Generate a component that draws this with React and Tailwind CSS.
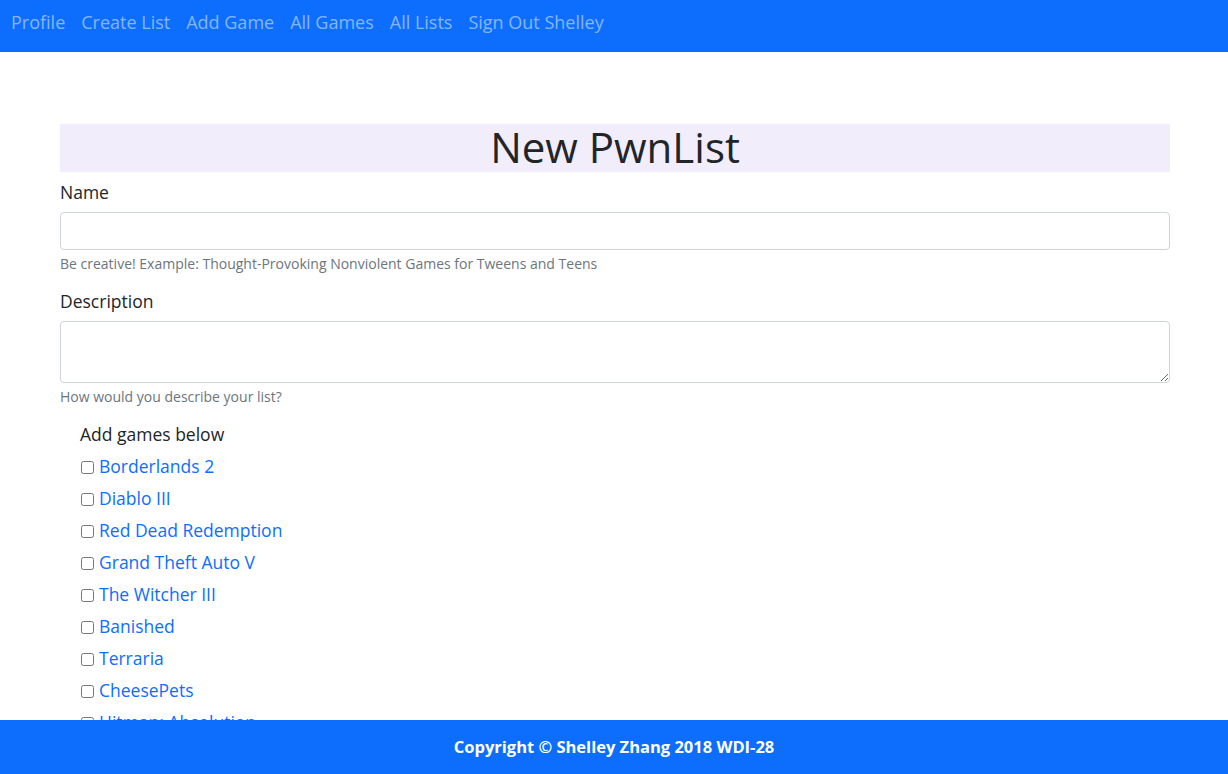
import React from "react";

const games = [
  "Borderlands 2",
  "Diablo III",
  "Red Dead Redemption",
  "Grand Theft Auto V",
  "The Witcher III",
  "Banished",
  "Terraria",
  "CheesePets",
  "Hitman: Absolution",
  "Stardew Valley",
];

const font = { fontFamily: '"Open Sans", "Noto Sans", sans-serif' };

export default function App() {
  return (
    <div className="min-h-screen bg-white text-[#212529]" style={font}>
      <nav className="h-[52px] bg-[#0d6efd] flex items-start pl-[3px] pt-[10px]">
        {["Profile", "Create List", "Add Game", "All Games", "All Lists", "Sign Out Shelley"].map((t) => (
          <a key={t} href="#" className="px-2 text-[18px] leading-6 text-[#86b6fe]">
            {t}
          </a>
        ))}
      </nav>

      <main className="ml-[60px] mr-[58px] mt-[72px] pb-[80px]">
        <h1 className="h-[48px] bg-[#f1edfa] text-center text-[42px] leading-[46px] text-[#212529]">
          New PwnList
        </h1>

        <div className="mt-2 mb-4">
          <label className="block text-[17.5px] leading-6 mb-2">Name</label>
          <input
            type="text"
            className="block w-full h-[38px] rounded-[4px] border border-[#ced4da] px-3 outline-none"
          />
          <div className="mt-1 text-[14px] leading-[19px] text-[#6c757d]">
            Be creative! Example: Thought-Provoking Nonviolent Games for Tweens and Teens
          </div>
        </div>

        <div className="mb-4">
          <label className="block text-[17.5px] leading-6 mb-2">Description</label>
          <textarea
            rows={2}
            className="block w-full h-[62px] rounded-[4px] border border-[#ced4da] px-3 py-1.5 outline-none"
          />
          <div className="mt-1 text-[14px] leading-[19px] text-[#6c757d]">
            How would you describe your list?
          </div>
        </div>

        <div className="pl-5">
          <div className="text-[17.5px] leading-6">Add games below</div>
          <div className="mt-1">
            {games.map((g) => (
              <div key={g} className="h-8 flex items-center">
                <input type="checkbox" className="w-[13px] h-[13px] ml-[1px] mr-[5px] mt-[3px]" />
                <a href="#" className="text-[17.5px] leading-6 text-[#0d6efd]">
                  {g}
                </a>
              </div>
            ))}
          </div>
        </div>
      </main>

      <footer className="fixed bottom-0 left-0 right-0 h-[54px] bg-[#0d6efd] flex items-center justify-center">
        <span className="text-white font-bold text-[16.5px]">Copyright © Shelley Zhang 2018 WDI-28</span>
      </footer>
    </div>
  );
}
